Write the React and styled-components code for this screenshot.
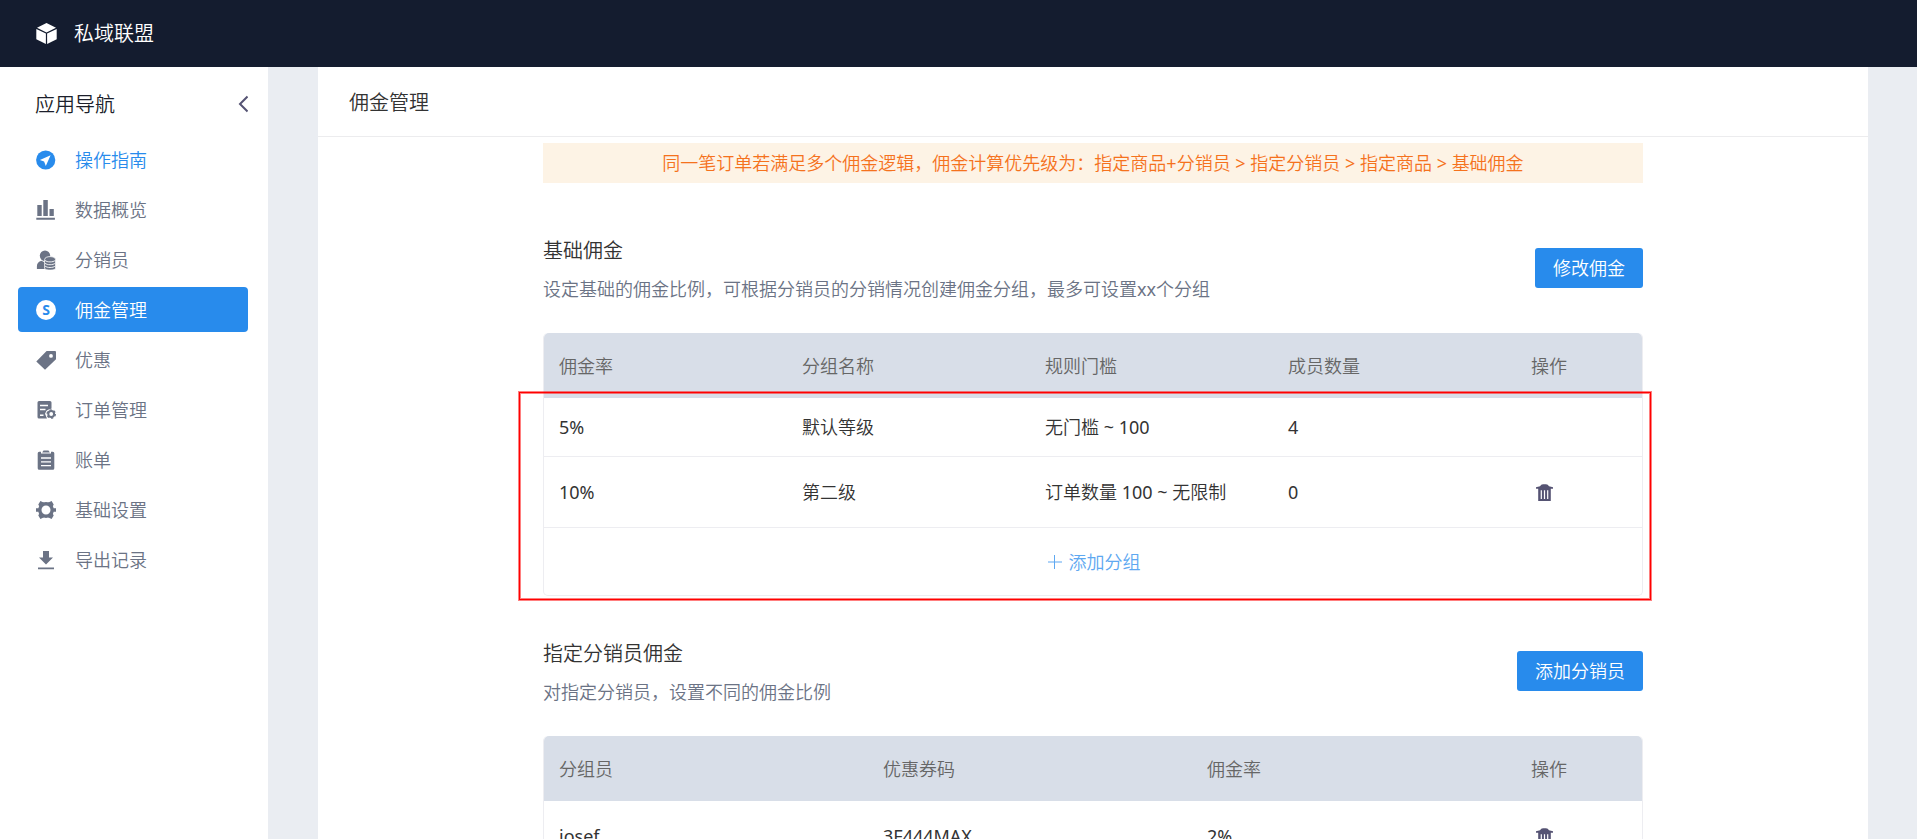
import React from "react";
import styled, { createGlobalStyle } from "styled-components";

const GlobalStyle = createGlobalStyle`
  * {
    box-sizing: border-box;
  }
  body {
    margin: 0;
    background: #eaedf2;
    color: #333333;
    font-family: "Noto Sans", "Noto Sans CJK SC", sans-serif;
    font-size: 18px;
    font-weight: 350;
    line-height: 30px;
  }
  button {
    font: inherit;
    cursor: pointer;
  }
`;

const Page = styled.div`
  height: 100vh;
  display: flex;
  flex-direction: column;
  overflow: hidden;
`;

const TopBar = styled.header`
  flex: none;
  height: 67px;
  padding: 0 36px;
  display: flex;
  align-items: center;
  gap: 17px;
  background: #141c2f;
  color: #ffffff;
  font-size: 20px;
`;

const Body = styled.div`
  flex: 1;
  min-height: 0;
  display: flex;
`;

const Sidebar = styled.aside`
  flex: none;
  width: 268px;
  padding: 23px 20px 0 18px;
  background: #ffffff;
`;

const SidebarHead = styled.div`
  display: flex;
  align-items: center;
  justify-content: space-between;
  padding-left: 17px;
  margin-bottom: 17px;
  color: #1c1f2b;
  font-size: 20px;
`;

const CollapseButton = styled.button`
  display: flex;
  padding: 0;
  border: 0;
  background: none;
  color: #555373;
`;

const Menu = styled.nav`
  display: flex;
  flex-direction: column;
  gap: 5px;
`;

const MenuLink = styled.a`
  height: 45px;
  padding-left: 18px;
  display: flex;
  align-items: center;
  gap: 19px;
  border-radius: 4px;
  text-decoration: none;
  background: ${props => (props.$active ? "#288bec" : "transparent")};
  color: ${props =>
    props.$active ? "#ffffff" : props.$guide ? "#288bec" : "#6b7385"};

  svg {
    flex: none;
  }
`;

const Main = styled.main`
  flex: 1;
  min-width: 0;
  margin: 0 49px 0 50px;
  overflow: hidden;
  background: #ffffff;
`;

const PageTitle = styled.h1`
  margin: 0;
  padding: 21px 31px 18px;
  border-bottom: 1px solid #ececee;
  font-size: 20px;
  font-weight: inherit;
`;

const Content = styled.div`
  max-width: 1100px;
  margin: 6px auto 0;
`;

const Notice = styled.p`
  margin: 0 0 53px;
  padding: 5px 0;
  background: #fdf3e5;
  color: #f5721d;
  text-align: center;
`;

const Section = styled.section`
  margin-bottom: 43px;
`;

const SectionHead = styled.div`
  display: flex;
  align-items: center;
  justify-content: space-between;
  margin-bottom: 33px;
`;

const SectionTitle = styled.h2`
  margin: 0 0 12px;
  font-size: 20px;
  font-weight: inherit;
`;

const SectionText = styled.p`
  margin: 0;
  color: #6b7385;
  line-height: 22px;
`;

const PrimaryButton = styled.button`
  height: 40px;
  padding: 0 18px;
  border: 0;
  border-radius: 3px;
  background: #288bec;
  color: #ffffff;
`;

const TableCard = styled.div`
  position: relative;
  border: 1px solid #ededf1;
  border-top: 0;
  border-radius: 5px;
`;

const Table = styled.table`
  width: 100%;
  table-layout: fixed;
  border-collapse: separate;
  border-spacing: 0;
`;

const HeadCell = styled.th`
  width: ${props => (props.$action ? "126px" : "auto")};
  height: 65px;
  padding: 0 15px;
  background: #d8dee8;
  color: #666666;
  font-weight: inherit;
  text-align: left;

  &:first-child {
    border-top-left-radius: 5px;
  }
  &:last-child {
    border-top-right-radius: 5px;
  }
`;

const Row = styled.tr`
  height: ${props => (props.$compact ? "59px" : "71px")};
`;

const Cell = styled.td`
  padding: 0 15px;
  border-bottom: 1px solid #ededf1;
`;

/* digits and latin words look too thin at the body weight */
const Latin = styled.span`
  font-weight: 400;
`;

const AddBar = styled.div`
  height: 67px;
  display: flex;
  align-items: center;
  justify-content: center;
`;

const AddButton = styled.button`
  display: flex;
  align-items: center;
  gap: 7px;
  padding: 0;
  border: 0;
  background: none;
  color: #5ea8f1;
`;

const TrashButton = styled.button`
  display: flex;
  padding: 0 5px;
  border: 0;
  background: none;
  color: #555373;
`;

/* red frame laid over the rows of a table */
const Highlight = styled.div`
  position: absolute;
  top: 59px;
  right: -9px;
  bottom: -5px;
  left: -25px;
  border: 1px solid #ff0000;
  box-shadow: 0 0 0 1px rgba(255, 0, 0, 0.5),
    inset 0 0 0 1px rgba(255, 0, 0, 0.5);
  pointer-events: none;
`;

const Icon = ({ children, size = 20, box = 20 }) => (
  <svg
    width={size}
    height={size}
    viewBox={`0 0 ${box} ${box}`}
    fill="currentColor"
    aria-hidden="true"
  >
    {children}
  </svg>
);

const CubeIcon = () => (
  <Icon size={21} box={21}>
    <path d="M10.5 0 20 4.7 10.5 9.4 1 4.7z" />
    <path d="M.3 5.9 9.9 10.5V21L.3 16.2z" />
    <path d="M20.7 5.9 11.1 10.5V21l9.6-4.8z" />
  </Icon>
);

const GuideIcon = () => (
  <Icon>
    <circle cx="9.7" cy="10" r="9.6" />
    <path d="M14.6 5.3 3.9 10.1l4.2 1.5 1.7 4.4z" fill="#fff" />
  </Icon>
);

const ChartIcon = () => (
  <Icon>
    <path d="M1.3 5h4.4v11H1.3zM7.3 0h4.5v16H7.3zM13.5 9h4.3v7h-4.3zM.3 17.8h18.6v1.9H.3z" />
  </Icon>
);

const MemberIcon = () => (
  <Icon>
    <circle cx="9" cy="5.8" r="5.2" />
    <path d="M5.5 10.8 9 12.5V19H.9v-2.6c0-3 1.7-5 4.6-5.6z" />
    <path
      d="M8.6 9.6c0-4 11-4 11 0v8.6c0 2.6-11 2.6-11 0z"
      stroke="#fff"
      strokeWidth=".8"
    />
    <path
      d="M9 10.4c2 2 8.2 2 10.2 0M9 13.2c2 2 8.2 2 10.2 0M9 16c2 2 8.2 2 10.2 0"
      fill="none"
      stroke="#fff"
      strokeWidth=".9"
    />
  </Icon>
);

const MoneyIcon = () => (
  <Icon>
    <circle cx="10" cy="10" r="10" />
    <text
      x="10"
      y="15"
      fill="#288bec"
      fontFamily="Open Sans, sans-serif"
      fontSize="14"
      fontWeight="700"
      textAnchor="middle"
    >
      S
    </text>
  </Icon>
);

const TagIcon = () => (
  <Icon>
    <path
      fillRule="evenodd"
      d="M10.6 1H19a1 1 0 0 1 1 1v7.2L9 19.8.3 11.4zM15 4a1.9 1.9 0 1 0 0 3.8A1.9 1.9 0 0 0 15 4z"
    />
  </Icon>
);

const OrderIcon = () => (
  <Icon>
    <path d="M3 1h11a1.5 1.5 0 0 1 1.5 1.5v6.3l-5 2-1.5 3 2 4.7H3A1.5 1.5 0 0 1 1.5 17V2.5A1.5 1.5 0 0 1 3 1z" />
    <path
      d="M4 5.6h8M4 9.4h5.5M4 15.2h3.5"
      stroke="#fff"
      strokeWidth="1.5"
    />
    <circle cx="15.2" cy="14" r="5.2" fill="#fff" />
    <circle
      cx="15.2"
      cy="14"
      r="2.9"
      fill="none"
      stroke="currentColor"
      strokeWidth="2"
    />
    <circle
      cx="15.2"
      cy="14"
      r="4.1"
      fill="none"
      stroke="currentColor"
      strokeWidth="1.4"
      strokeDasharray="2.15 2.14"
    />
  </Icon>
);

const BillIcon = () => (
  <Icon>
    <path d="M3.2 1.8H5v1.7h10V1.8h1.8a1.5 1.5 0 0 1 1.5 1.5v14.9a1.5 1.5 0 0 1-1.5 1.5H3.2a1.5 1.5 0 0 1-1.5-1.5V3.3a1.5 1.5 0 0 1 1.5-1.5z" />
    <path d="M6.2 2.5 7.5.6h5l1.3 1.9z" />
    <path d="M5 8h10M5 11.8h10M5 15.6h10" stroke="#fff" strokeWidth="1.3" />
  </Icon>
);

const GearIcon = () => (
  <Icon>
    <circle
      cx="10"
      cy="10"
      r="6.2"
      fill="none"
      stroke="currentColor"
      strokeWidth="3.4"
    />
    <path d="M4.4.9 8.6 3l-5 4.2-1.3-2.8zM15.6.9 11.4 3l5 4.2 1.3-2.8zM4.4 19.1 8.6 17l-5-4.2-1.3 2.8zM15.6 19.1 11.4 17l5-4.2 1.3 2.8zM0 8.2h4v3.6H0zM16 8.2h4v3.6h-4z" />
  </Icon>
);

const ExportIcon = () => (
  <Icon>
    <path d="M7 1h6v6.5h4l-7 7-7-7h4zM2 17.5h16v1.8H2z" />
  </Icon>
);

const TrashIcon = () => (
  <Icon size={17} box={17}>
    <path
      fillRule="evenodd"
      d="M4 2.3Q5 .2 7 .2h3q2 0 3 2.1l4 1v1.5h-2.2V17H2.2V4.8H0V3.3zM4.7 6.2V15h1.2V6.2zM7.9 6.2V15h1.2V6.2zM11.1 6.2V15h1.2V6.2z"
    />
  </Icon>
);

const ChevronIcon = () => (
  <Icon>
    <path
      d="M19.5 1.5 12 9l7.5 7.5"
      fill="none"
      stroke="currentColor"
      strokeWidth="2"
    />
  </Icon>
);

const PlusIcon = () => (
  <Icon size={16} box={16}>
    <path d="M8 1h1v14H8zM2 7.5h14v1H2z" />
  </Icon>
);

const menu = [
  { label: "操作指南", icon: GuideIcon, guide: true },
  { label: "数据概览", icon: ChartIcon },
  { label: "分销员", icon: MemberIcon },
  { label: "佣金管理", icon: MoneyIcon, active: true },
  { label: "优惠", icon: TagIcon },
  { label: "订单管理", icon: OrderIcon },
  { label: "账单", icon: BillIcon },
  { label: "基础设置", icon: GearIcon },
  { label: "导出记录", icon: ExportIcon }
];

const groups = [
  { cells: ["5%", "默认等级", "无门槛 ~ 100", "4"], fixed: true },
  { cells: ["10%", "第二级", "订单数量 100 ~ 无限制", "0"] }
];

const members = [{ cells: ["josef", "3F444MAX", "2%"] }];

const renderText = text =>
  text
    .split(/([\x20-\x7e]+)/)
    .map((part, i) => (i % 2 ? <Latin key={i}>{part}</Latin> : part));

const CommissionTable = ({ columns, rows }) => (
  <Table>
    <thead>
      <tr>
        {columns.map(column => (
          <HeadCell key={column} scope="col">
            {column}
          </HeadCell>
        ))}
        <HeadCell scope="col" $action>
          操作
        </HeadCell>
      </tr>
    </thead>
    <tbody>
      {rows.map(row => (
        <Row key={row.cells[0]} $compact={row.fixed}>
          {row.cells.map((cell, i) => (
            <Cell key={i}>{renderText(cell)}</Cell>
          ))}
          <Cell>
            {!row.fixed && (
              <TrashButton type="button" aria-label="删除">
                <TrashIcon />
              </TrashButton>
            )}
          </Cell>
        </Row>
      ))}
    </tbody>
  </Table>
);

const CommissionSection = ({ title, text, action, children }) => (
  <Section>
    <SectionHead>
      <div>
        <SectionTitle>{title}</SectionTitle>
        <SectionText>{renderText(text)}</SectionText>
      </div>
      <PrimaryButton type="button">{action}</PrimaryButton>
    </SectionHead>
    <TableCard>{children}</TableCard>
  </Section>
);

const App = () => (
  <>
    <GlobalStyle />
    <Page>
      <TopBar>
        <CubeIcon />
        <span>私域联盟</span>
      </TopBar>
      <Body>
        <Sidebar>
          <SidebarHead>
            <span>应用导航</span>
            <CollapseButton type="button" aria-label="收起导航">
              <ChevronIcon />
            </CollapseButton>
          </SidebarHead>
          <Menu>
            {menu.map(({ label, icon: MenuIcon, active, guide }) => (
              <MenuLink href="#" key={label} $active={active} $guide={guide}>
                <MenuIcon />
                <span>{label}</span>
              </MenuLink>
            ))}
          </Menu>
        </Sidebar>
        <Main>
          <PageTitle>佣金管理</PageTitle>
          <Content>
            <Notice>
              {renderText(
                "同一笔订单若满足多个佣金逻辑，佣金计算优先级为：指定商品+分销员 > 指定分销员 > 指定商品 > 基础佣金"
              )}
            </Notice>
            <CommissionSection
              title="基础佣金"
              text="设定基础的佣金比例，可根据分销员的分销情况创建佣金分组，最多可设置xx个分组"
              action="修改佣金"
            >
              <CommissionTable
                columns={["佣金率", "分组名称", "规则门槛", "成员数量"]}
                rows={groups}
              />
              <AddBar>
                <AddButton type="button">
                  <PlusIcon />
                  添加分组
                </AddButton>
              </AddBar>
              <Highlight />
            </CommissionSection>
            <CommissionSection
              title="指定分销员佣金"
              text="对指定分销员，设置不同的佣金比例"
              action="添加分销员"
            >
              <CommissionTable
                columns={["分组员", "优惠券码", "佣金率"]}
                rows={members}
              />
            </CommissionSection>
          </Content>
        </Main>
      </Body>
    </Page>
  </>
);

export default App;
